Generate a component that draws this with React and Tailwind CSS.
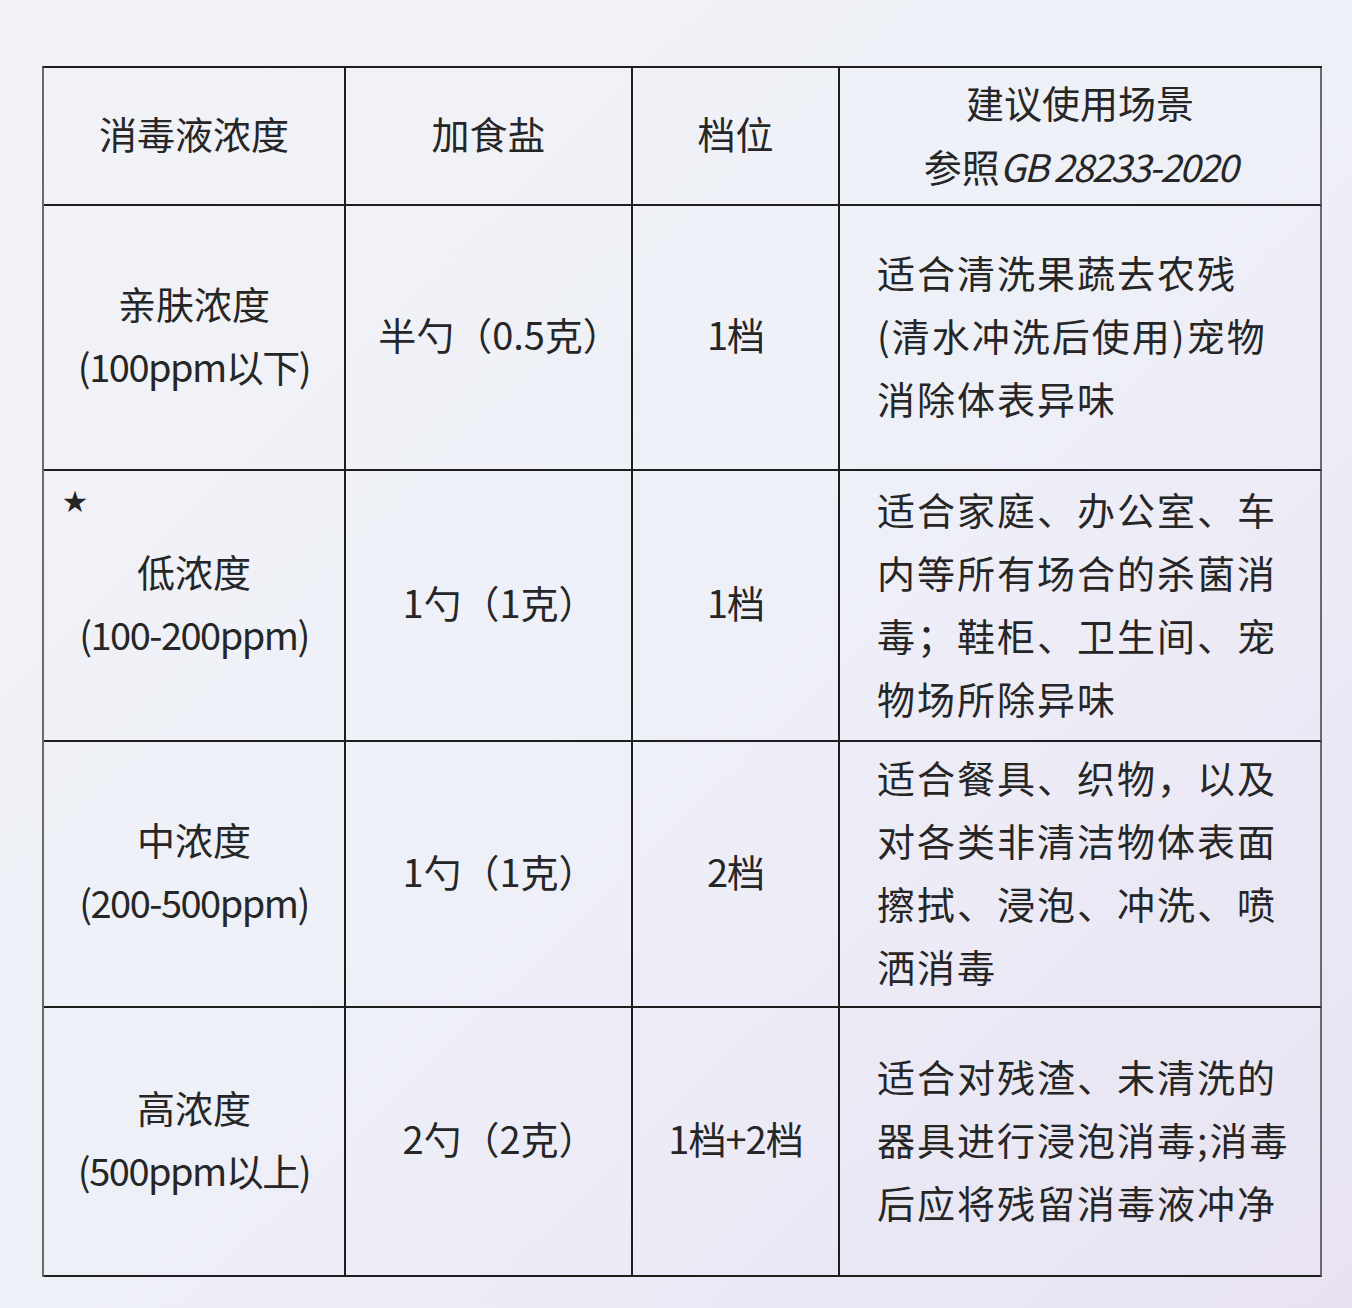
import React from 'react'

const rows = [
  {
    name: ['亲肤浓度', '(100ppm以下)'],
    salt: '半勺（0.5克）',
    level: '1档',
    desc: ['适合清洗果蔬去农残', '(清水冲洗后使用)宠物', '消除体表异味'],
  },
  {
    star: true,
    name: ['低浓度', '(100-200ppm)'],
    salt: '1勺（1克）',
    level: '1档',
    desc: ['适合家庭、办公室、车', '内等所有场合的杀菌消', '毒；鞋柜、卫生间、宠', '物场所除异味'],
  },
  {
    name: ['中浓度', '(200-500ppm)'],
    salt: '1勺（1克）',
    level: '2档',
    desc: ['适合餐具、织物，以及', '对各类非清洁物体表面', '擦拭、浸泡、冲洗、喷', '洒消毒'],
  },
  {
    name: ['高浓度', '(500ppm以上)'],
    salt: '2勺（2克）',
    level: '1档+2档',
    desc: ['适合对残渣、未清洗的', '器具进行浸泡消毒;消毒', '后应将残留消毒液冲净'],
  },
]

const heights = ['h-[265px]', 'h-[271px]', 'h-[266px]', 'h-[269px]']

export default function App() {
  return (
    <div
      className="w-[1352px] h-[1308px] overflow-hidden bg-gradient-to-br from-[#f2f3f7] via-[#eef0f8] to-[#e8e2f2] text-[#262626] text-[38px] leading-[63px]"
      style={{ fontFamily: '"Noto Sans CJK SC", "Noto Sans", sans-serif' }}
    >
      <div className="pt-[66px] pl-[42px]">
        <div className="w-[1280px] grid grid-cols-[302px_287px_207px_482px] border-t-2 border-l-2 border-t-[#1e1e1e] border-l-[#6a6a6a]">
          {/* header */}
          <div className="h-[138px] pb-[8px] flex items-center justify-center border-r-2 border-b-2 border-[#1e1e1e]">消毒液浓度</div>
          <div className="h-[138px] pb-[8px] flex items-center justify-center border-r-2 border-b-2 border-[#1e1e1e]">加食盐</div>
          <div className="h-[138px] pb-[8px] flex items-center justify-center border-r-2 border-b-2 border-[#1e1e1e]">档位</div>
          <div className="h-[138px] pb-[4px] flex flex-col items-center justify-center border-r-2 border-b-2 border-b-[#1e1e1e] border-r-[#6a6a6a] leading-[64px]">
            <span>建议使用场景</span>
            <span>参照<span className="italic tracking-[-2px]">GB 28233-2020</span></span>
          </div>

          {rows.map((r, i) => (
            <React.Fragment key={i}>
              <div className={`${heights[i]} pb-[8px] relative flex flex-col items-center justify-center border-r-2 border-b-2 border-[#1e1e1e]`}>
                {r.star && <span className="absolute left-[19px] top-[13px] text-[24px] leading-[32px]">★</span>}
                <span>{r.name[0]}</span>
                <span className="tracking-[-1.5px]">{r.name[1]}</span>
              </div>
              <div className={`${heights[i]} pb-[8px] pl-[22px] flex items-center justify-center border-r-2 border-b-2 border-[#1e1e1e]`}>
                {r.salt}
              </div>
              <div className={`${heights[i]} pb-[8px] flex items-center justify-center border-r-2 border-b-2 border-[#1e1e1e] tracking-[-1px]`}>
                {r.level}
              </div>
              <div className={`${heights[i]} pb-[6px] flex flex-col justify-center pl-[37px] border-r-2 border-b-2 border-b-[#1e1e1e] border-r-[#6a6a6a] tracking-[2px] whitespace-nowrap`}>
                {r.desc.map((l, j) => (
                  <span key={j}>{l}</span>
                ))}
              </div>
            </React.Fragment>
          ))}
        </div>
      </div>
    </div>
  )
}
